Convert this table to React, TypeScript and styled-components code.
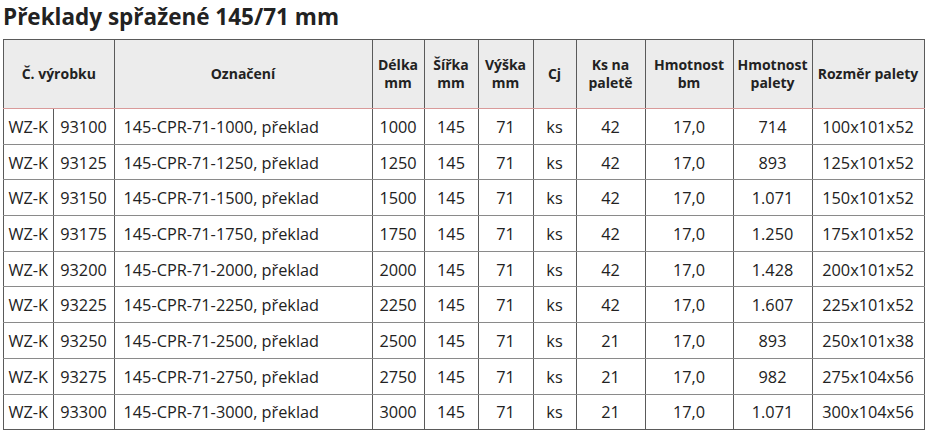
import React from "react";
import styled, { createGlobalStyle } from "styled-components";

const Global = createGlobalStyle`
  html, body { margin: 0; padding: 0; background: #ffffff; }
  body { font-family: "Open Sans", "Noto Sans", sans-serif; color: #222222; }
`;

const Page = styled.div`
  padding: 3px 3px 0 3px;
  width: 921px;
`;

const Title = styled.h1`
  margin: 0 0 8px 0;
  font-size: 22.5px;
  line-height: 28px;
  font-weight: 700;
  color: #222222;
  letter-spacing: 0;
`;

const Table = styled.table`
  border-collapse: collapse;
  table-layout: fixed;
  width: 921px;
  border: 1px solid #5a5a5a;
`;

const HeadCell = styled.th`
  background: #ececec;
  border-left: 1px solid #5a5a5a;
  border-right: 1px solid #5a5a5a;
  border-top: 1px solid #5a5a5a;
  border-bottom: 1px solid #d99a9a;
  font-size: 14px;
  line-height: 18px;
  font-weight: 700;
  text-align: center;
  padding: 0 2px;
  height: 68px;
  color: #222222;
`;

const Cell = styled.td<{ $left?: boolean }>`
  border-left: 1px solid #5a5a5a;
  border-right: 1px solid #5a5a5a;
  border-top: 1px solid #8a8a8a;
  border-bottom: 1px solid #8a8a8a;
  font-size: 16.3px;
  line-height: 20px;
  text-align: ${(p) => (p.$left ? "left" : "center")};
  padding: 1px ${(p) => (p.$left ? "9px" : "1px")} 0;
  height: 33.7px;
  color: #222222;
  white-space: nowrap;
`;

const LastRow = styled.tr`
  td { border-bottom-color: #5a5a5a; }
`;

const widths = [49.5, 61, 258, 52, 54, 55, 43, 69, 88, 79, 112];

const rows: string[][] = [
  ["93100", "1000", "42", "714", "100x101x52"],
  ["93125", "1250", "42", "893", "125x101x52"],
  ["93150", "1500", "42", "1.071", "150x101x52"],
  ["93175", "1750", "42", "1.250", "175x101x52"],
  ["93200", "2000", "42", "1.428", "200x101x52"],
  ["93225", "2250", "42", "1.607", "225x101x52"],
  ["93250", "2500", "21", "893", "250x101x38"],
  ["93275", "2750", "21", "982", "275x104x56"],
  ["93300", "3000", "21", "1.071", "300x104x56"],
];

export default function App() {
  return (
    <Page>
      <Global />
      <Title>Překlady spřažené 145/71 mm</Title>
      <Table>
        <colgroup>
          {widths.map((w, i) => (
            <col key={i} style={{ width: w }} />
          ))}
        </colgroup>
        <thead>
          <tr>
            <HeadCell colSpan={2}>Č. výrobku</HeadCell>
            <HeadCell>Označení</HeadCell>
            <HeadCell>Délka<br />mm</HeadCell>
            <HeadCell>Šířka<br />mm</HeadCell>
            <HeadCell>Výška<br />mm</HeadCell>
            <HeadCell>Cj</HeadCell>
            <HeadCell>Ks na<br />paletě</HeadCell>
            <HeadCell>Hmotnost<br />bm</HeadCell>
            <HeadCell>Hmotnost<br />palety</HeadCell>
            <HeadCell>Rozměr palety</HeadCell>
          </tr>
        </thead>
        <tbody>
          {rows.map(([num, len, ks, mass, size], i) => {
            const Row = i === rows.length - 1 ? LastRow : "tr";
            return (
              <Row key={num}>
                <Cell>WZ-K</Cell>
                <Cell>{num}</Cell>
                <Cell $left>145-CPR-71-{len}, překlad</Cell>
                <Cell>{len}</Cell>
                <Cell>145</Cell>
                <Cell>71</Cell>
                <Cell>ks</Cell>
                <Cell>{ks}</Cell>
                <Cell>17,0</Cell>
                <Cell>{mass}</Cell>
                <Cell>{size}</Cell>
              </Row>
            );
          })}
        </tbody>
      </Table>
    </Page>
  );
}
